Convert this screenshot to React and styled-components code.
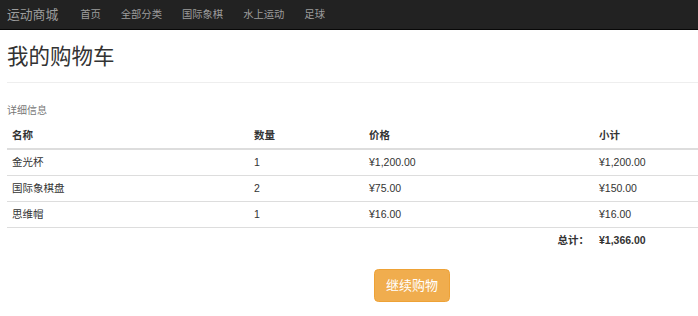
import React from 'react';
import styled, { createGlobalStyle } from 'styled-components';

const GlobalStyle = createGlobalStyle`
  body {
    margin: 0;
    background: #fff;
    color: #333;
    font-family: "Liberation Sans", Arial, "Noto Sans CJK SC", sans-serif;
    font-size: 10.5px;
    line-height: 15px;
  }
`;

const Navbar = styled.nav`
  height: 29px;
  background: #222;
  border-bottom: 1px solid #080808;
  display: flex;
  align-items: center;
  padding-left: 7px;
`;

const Brand = styled.a`
  color: #9d9d9d;
  font-size: 12.8px;
  margin-right: 22px;
  text-decoration: none;
`;

const NavLinks = styled.ul`
  display: flex;
  gap: 20px;
  list-style: none;
  margin: 0;
  padding: 0;
`;

const NavLink = styled.li`
  color: #9d9d9d;
  font-size: 10.3px;
`;

const Page = styled.main`
  padding-left: 7px;
`;

const Heading = styled.h2`
  margin: 15px 0 0;
  font-size: 21.5px;
  font-weight: 400;
  line-height: 24px;
  color: #333;
`;

const Rule = styled.hr`
  margin: 13px 0 0;
  border: 0;
  border-top: 1px solid #eee;
`;

const Caption = styled.div`
  margin-top: 20px;
  color: #777;
  font-size: 10px;
`;

const Table = styled.table`
  margin-top: 5px;
  width: 691px;
  border-collapse: collapse;
  table-layout: fixed;
`;

const Cell = styled.td`
  padding: 5px;
  line-height: 15px;
  text-align: ${(p) => (p.$right ? 'right' : 'left')};
  font-weight: ${(p) => (p.$bold ? 700 : 400)};
  border-bottom: ${(p) => (p.$last ? '0' : '1px solid #ddd')};
`;

const HeadCell = styled.th`
  padding: 5px;
  line-height: 15px;
  text-align: left;
  font-weight: 700;
  border-bottom: 2px solid #ddd;
`;

const ButtonRow = styled.div`
  display: flex;
  padding-left: 367px;
  margin-top: 16px;
`;

const Button = styled.button`
  background: #f0ad4e;
  border: 1px solid #eea236;
  color: #fff;
  font-family: inherit;
  font-size: 13px;
  line-height: 18px;
  padding: 6.5px 11px;
  border-radius: 4.5px;
`;

const items = [
  { name: '金光杯', qty: 1, price: '¥1,200.00', total: '¥1,200.00' },
  { name: '国际象棋盘', qty: 2, price: '¥75.00', total: '¥150.00' },
  { name: '思维帽', qty: 1, price: '¥16.00', total: '¥16.00' },
];

const App = () => {
  return (
    <>
      <GlobalStyle />
      <Navbar>
        <Brand>运动商城</Brand>
        <NavLinks>
          {['首页', '全部分类', '国际象棋', '水上运动', '足球'].map((l) => (
            <NavLink key={l}>{l}</NavLink>
          ))}
        </NavLinks>
      </Navbar>
      <Page>
        <Heading>我的购物车</Heading>
        <Rule />
        <Caption>详细信息</Caption>
        <Table>
          <colgroup>
            <col style={{ width: 242 }} />
            <col style={{ width: 115 }} />
            <col style={{ width: 230 }} />
            <col />
          </colgroup>
          <thead>
            <tr>
              <HeadCell>名称</HeadCell>
              <HeadCell>数量</HeadCell>
              <HeadCell>价格</HeadCell>
              <HeadCell>小计</HeadCell>
            </tr>
          </thead>
          <tbody>
            {items.map((item) => (
              <tr key={item.name}>
                <Cell>{item.name}</Cell>
                <Cell>{item.qty}</Cell>
                <Cell>{item.price}</Cell>
                <Cell>{item.total}</Cell>
              </tr>
            ))}
            <tr>
              <Cell $last />
              <Cell $last />
              <Cell $last $right $bold>总计：</Cell>
              <Cell $last $bold>¥1,366.00</Cell>
            </tr>
          </tbody>
        </Table>
        <ButtonRow>
          <Button>继续购物</Button>
        </ButtonRow>
      </Page>
    </>
  );
};

export default App;
